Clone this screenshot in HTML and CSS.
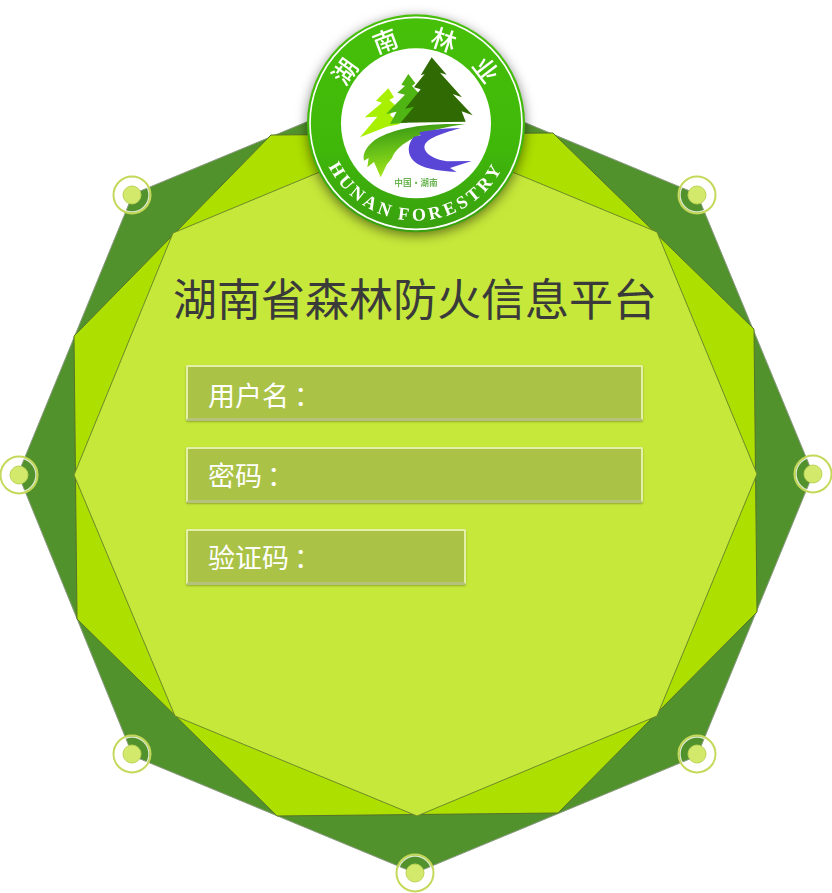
FILE: index.html
```html
<!DOCTYPE html>
<html lang="zh-CN">
<head>
  <meta charset="UTF-8" />
  <title>湖南省森林防火信息平台</title>
  <link rel="stylesheet" href="styles.css">
</head>
<body>
<div class="stage">

  <svg class="octagons" width="832" height="893" viewBox="0 0 832 893">
    <polygon class="oct-outer" points="415,77 697,194 813,474 697,756 415,873 133,756 18,474 133,194" />
    <polygon class="oct-middle" points="271,135 553,133 754,329 757,612 558,813 277,816 77,619 74,336" />
    <polygon class="oct-inner" points="416,132 657,232 757,474 657,716 417,816 175,716 74,475 173,233" />
    <g class="pin"><circle class="pin-halo" cx="132" cy="195" r="17" /><circle class="pin-ring" cx="132" cy="195" r="18.5" /><circle class="pin-dot" cx="132" cy="195" r="9" /></g>
    <g class="pin"><circle class="pin-halo" cx="697" cy="195" r="17" /><circle class="pin-ring" cx="697" cy="195" r="18.5" /><circle class="pin-dot" cx="697" cy="195" r="9" /></g>
    <g class="pin"><circle class="pin-halo" cx="813" cy="474" r="17" /><circle class="pin-ring" cx="813" cy="474" r="18.5" /><circle class="pin-dot" cx="813" cy="474" r="9" /></g>
    <g class="pin"><circle class="pin-halo" cx="697" cy="754" r="17" /><circle class="pin-ring" cx="697" cy="754" r="18.5" /><circle class="pin-dot" cx="697" cy="754" r="9" /></g>
    <g class="pin"><circle class="pin-halo" cx="415" cy="873" r="17" /><circle class="pin-ring" cx="415" cy="873" r="18.5" /><circle class="pin-dot" cx="415" cy="873" r="9" /></g>
    <g class="pin"><circle class="pin-halo" cx="132" cy="754" r="17" /><circle class="pin-ring" cx="132" cy="754" r="18.5" /><circle class="pin-dot" cx="132" cy="754" r="9" /></g>
    <g class="pin"><circle class="pin-halo" cx="19" cy="475" r="17" /><circle class="pin-ring" cx="19" cy="475" r="18.5" /><circle class="pin-dot" cx="19" cy="475" r="9" /></g>
  </svg>

  <svg class="logo" width="250" height="250" viewBox="0 0 750 750">
    <defs>
      <linearGradient id="badge" x1="0" y1="0" x2="0" y2="1">
        <stop offset="0" stop-color="#46c008" />
        <stop offset="0.6" stop-color="#40b80a" />
        <stop offset="1" stop-color="#38a00e" />
      </linearGradient>
      <linearGradient id="swoosh" x1="0" y1="0" x2="0.25" y2="1">
        <stop offset="0" stop-color="#2f8f12" />
        <stop offset="0.55" stop-color="#6cc418" />
        <stop offset="1" stop-color="#a6e61a" />
      </linearGradient>
      <path id="ringBottom" d="M86 370 A292 292 0 0 0 670 370" />
    </defs>
    <circle cx="378" cy="370" r="327" fill="url(#badge)" />
    <circle cx="378" cy="370" r="318" fill="none" stroke="#fff" stroke-width="5" />
    <circle cx="378" cy="370" r="225" fill="#fff" />

    <text class="logo-cn" x="378" y="134" transform="rotate(-54 378 370)">湖</text>
    <text class="logo-cn" x="378" y="134" transform="rotate(-20.5 378 370)">南</text>
    <text class="logo-cn" x="378" y="134" transform="rotate(18.5 378 370)">林</text>
    <text class="logo-cn" x="378" y="134" transform="rotate(52.5 378 370)">业</text>
    <text class="logo-en"><textPath href="#ringBottom" startOffset="50%">HUNAN FORESTRY</textPath></text>
    <text class="logo-small" x="378" y="558">中国·湖南</text>

    <!-- light tree, middle tree, dark tree -->
    <path fill="#a8f000" d="M295 265 L312 292 L298 300 L318 318 L300 345 L330 372 L290 380 L210 412 L262 350 L224 352 L276 308 L258 302 Z" />
    <path fill="#4fb512" d="M355 222 L376 250 L366 258 L385 278 L370 300 L395 340 L350 368 L300 372 L320 335 L288 342 L345 284 L322 278 L345 258 L334 254 Z" />
    <path fill="#2f6a02" d="M425 172 L470 224 L450 218 L516 292 L488 282 L548 346 L515 334 L527 365 L332 368 L372 320 L345 326 L392 268 L372 262 L404 222 L392 226 Z" />
    <!-- river bank and water -->
    <path fill="url(#swoosh)" d="M525 373 C440 368 330 378 268 412 C232 432 216 460 222 482 L236 474 L232 502 L252 486 L272 532 L290 494 L306 474 C322 430 400 388 525 373 Z" />
    <path fill="#5a46d6" d="M512 384 C450 384 410 394 388 396 L392 406 L372 410 C352 430 350 462 372 484 C395 506 440 512 500 516 L480 504 L545 483 L470 484 C430 478 398 458 404 436 C412 412 470 396 512 384 Z" />
  </svg>

  <div class="panel">
    <h1 class="title">湖南省森林防火信息平台</h1>
    <div class="form">
      <div class="field field-first"><span class="field-label">用户名</span>：</div>
      <div class="field"><span class="field-label">密码</span>：</div>
      <div class="field field-short"><span class="field-label">验证码</span>：</div>
    </div>
  </div>

</div>
</body>
</html>
```

FILE: styles.css
```css
html,body{
  margin:0;
  padding:0;
  background:#fff;
  font-family:"Noto Sans CJK SC","Liberation Sans",sans-serif
}
.stage{
  position:relative;
  width:832px;
  height:893px;
  overflow:hidden
}
.octagons{
  position:absolute;
  left:0;
  top:0
}
.oct-outer{fill:#52922c;stroke:#8a9a80;stroke-width:1}
.oct-middle{fill:#addf00;stroke:#55722a;stroke-width:1}
.oct-inner{fill:#c6e83a;stroke:#6c8a28;stroke-width:1}
.pin-halo{fill:none;stroke:#fff;stroke-width:1.5;opacity:.8}
.pin-ring{fill:none;stroke:#c6d85a;stroke-width:2}
.pin-dot{fill:#d2e96c;stroke:#bcd455;stroke-width:1}

.logo{
  position:absolute;
  left:290px;
  top:0;
  filter:drop-shadow(0 3px 6px rgba(0,0,0,.5))
}
.logo-cn{
  font-size:74px;
  font-weight:500;
  fill:#fff;
  text-anchor:middle
}
.logo-en{
  font-family:"Liberation Serif",serif;
  font-weight:bold;
  font-size:54px;
  letter-spacing:11px;
  word-spacing:-8px;
  fill:#fff;
  text-anchor:middle
}
.logo-small{
  font-size:26px;
  font-weight:bold;
  fill:#6cb554;
  text-anchor:middle
}

.panel{
  position:relative;
  padding-top:268px
}
.title{
  margin:0;
  font-size:44px;
  line-height:58px;
  font-weight:400;
  color:#3a3a3a;
  text-align:center;
  padding-right:2px
}
.form{
  display:flex;
  flex-direction:column;
  gap:26px;
  margin:39px 0 0 186px
}
.field{
  box-sizing:border-box;
  width:457px;
  height:56px;
  padding-left:20px;
  background:#aac246;
  border:2px solid #e4f0a8;
  border-bottom:3px solid #b6c27c;
  border-radius:2px;
  box-shadow:0 1px 2px rgba(90,110,30,.5);
  color:#fff;
  font-size:27px;
  line-height:52px
}
.field-first{line-height:55px}
.field-label{margin-right:5px}
.field-short{width:280px}
```
